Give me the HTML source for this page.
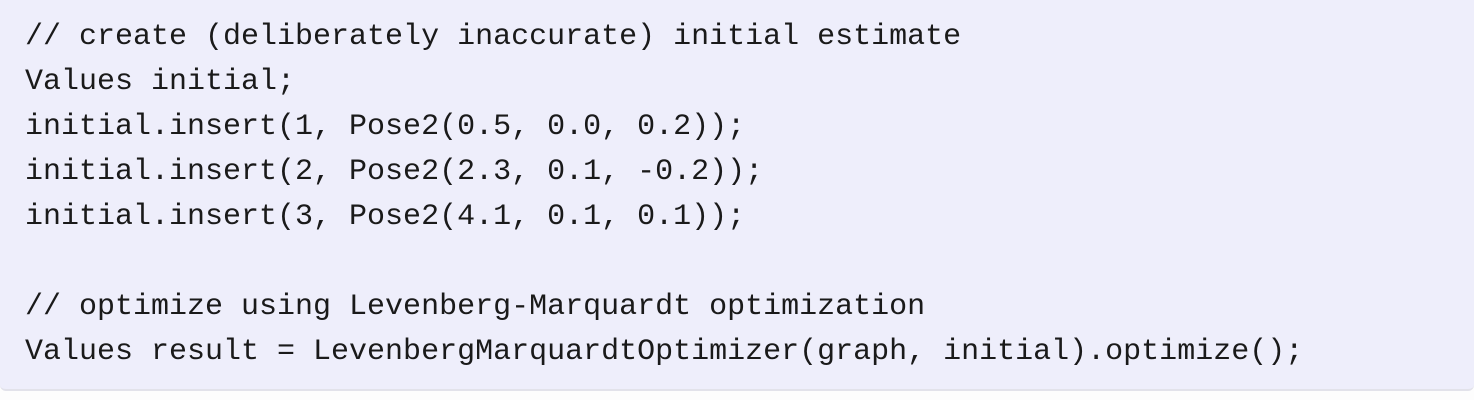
<!DOCTYPE html>
<html><head><style>
html,body{margin:0;padding:0;background:#fdfdfd;width:1474px;height:400px;overflow:hidden}
.box{position:absolute;left:0;top:-10px;width:1474px;height:399px;background:#eeeefb;border-bottom:2px solid #e2e2ea;border-radius:6px;}
pre{position:absolute;left:25px;top:15px;margin:0;font-family:"Liberation Mono",monospace;font-size:30px;line-height:45px;color:#1a1a1a;}
</style></head><body>
<div class="box"></div>
<pre>// create (deliberately inaccurate) initial estimate
Values initial;
initial.insert(1, Pose2(0.5, 0.0, 0.2));
initial.insert(2, Pose2(2.3, 0.1, -0.2));
initial.insert(3, Pose2(4.1, 0.1, 0.1));

// optimize using Levenberg-Marquardt optimization
Values result = LevenbergMarquardtOptimizer(graph, initial).optimize();</pre>
</body></html>
